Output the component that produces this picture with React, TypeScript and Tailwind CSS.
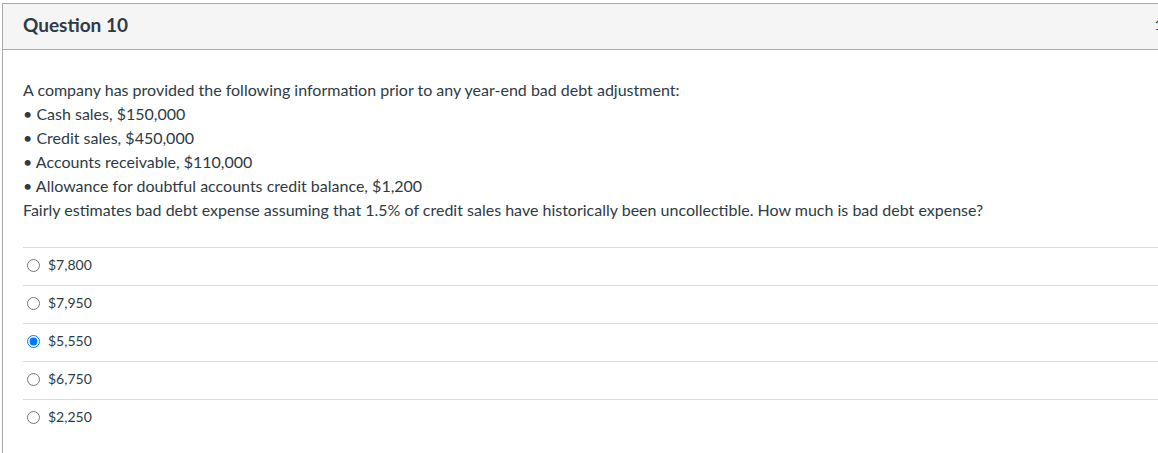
import React from 'react';

const answers = ['$7,800', '$7,950', '$5,550', '$6,750', '$2,250'];
const selected = 2;

export default function App() {
    return (
        <div className="w-[1158px] h-[453px] overflow-hidden bg-white pt-[3px] pl-[2px]" style={{ fontFamily: 'Lato, "Open Sans", sans-serif' }}>
            <div className="w-[1204px] h-[480px] border border-[#a9a9a9] text-[#2d3b45]">
                {/* Header */}
                <div className="h-[46px] bg-[#f5f5f5] border-b border-[#a9a9a9] px-5 pb-[4px] flex items-center">
                    <h2 className="text-[19px] font-bold leading-none">Question 10</h2>
                    <div className="flex-1" />
                    <span className="text-sm text-[#2d3b45]">1 pts</span>
                </div>

                {/* Body */}
                <div className="px-5 pt-[28px]">
                    <div className="text-[16px] leading-[24px]">
                        <div>A company has provided the following information prior to any year-end bad debt adjustment:</div>
                        <div>• Cash sales, $150,000</div>
                        <div>• Credit sales, $450,000</div>
                        <div>• Accounts receivable, $110,000</div>
                        <div>• Allowance for doubtful accounts credit balance, $1,200</div>
                        <div>Fairly estimates bad debt expense assuming that 1.5% of credit sales have historically been uncollectible. How much is bad debt expense?</div>
                    </div>

                    <div className="mt-[25px]">
                        {answers.map((a, i) => (
                            <label key={a} className="h-[38px] border-t border-[#dcdcdc] flex items-center gap-[8px] pl-[4px] pb-[3px] text-sm">
                                <input type="radio" name="q10" checked={i === selected} readOnly className="m-0 w-[13px] h-[13px] accent-[#0075ff]" />
                                <span className="text-[#2d3b45]">{a}</span>
                            </label>
                        ))}
                    </div>
                </div>
            </div>
        </div>
    );
}
